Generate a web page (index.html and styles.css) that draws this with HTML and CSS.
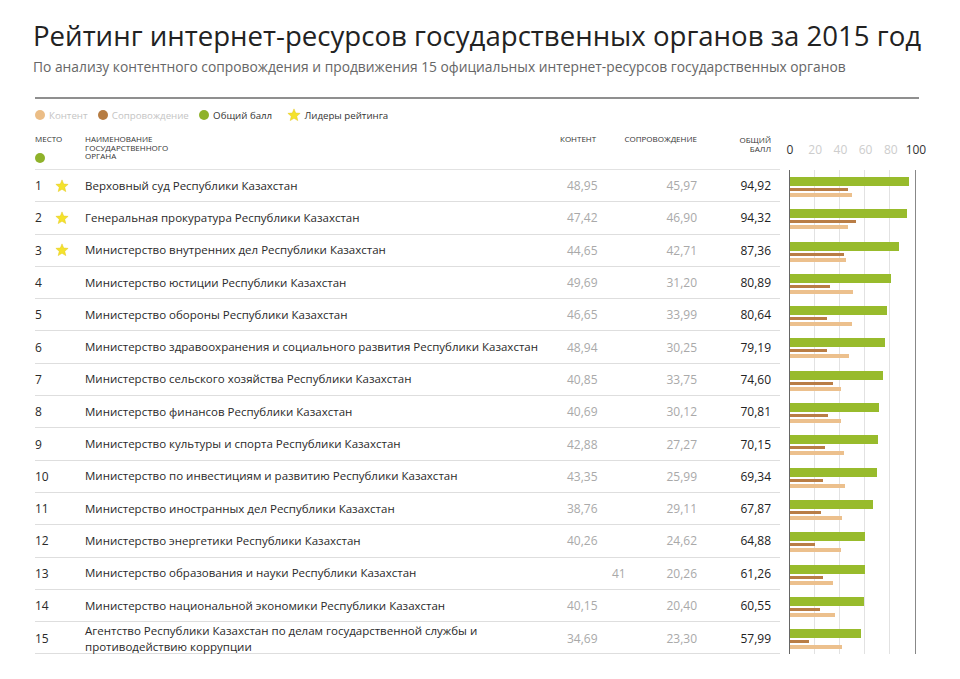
FILE: index.html
```html
<!DOCTYPE html>
<html lang="ru">
<head>
<meta charset="utf-8">
<title>Рейтинг интернет-ресурсов государственных органов за 2015 год</title>
<link rel="stylesheet" href="styles.css">
</head>
<body>
<svg width="0" height="0" class="defs">
  <defs>
    <symbol id="star" viewBox="0 0 24 24">
      <polygon points="12,1.5 14.9,8.6 22.5,9.2 16.7,14.1 18.5,21.6 12,17.6 5.5,21.6 7.3,14.1 1.5,9.2 9.1,8.6" fill="#f4e22c" stroke="#e2c715" stroke-width="0.8" stroke-linejoin="round"/>
    </symbol>
  </defs>
</svg>
<div class="page">
  <h1 class="title">Рейтинг интернет-ресурсов государственных органов за 2015 год</h1>
  <p class="subtitle">По анализу контентного сопровождения и продвижения 15 официальных интернет-ресурсов государственных органов</p>
  <div class="rule"></div>

  <div class="legend">
    <span class="lg-item lg-light"><i class="dot dot-content"></i>Контент</span>
    <span class="lg-item lg-light"><i class="dot dot-support"></i>Сопровождение</span>
    <span class="lg-item"><i class="dot dot-total"></i>Общий балл</span>
    <span class="lg-item lg-star"><svg class="star"><use href="#star"/></svg>Лидеры рейтинга</span>
  </div>

  <div class="head">
    <div class="cells head-cells">
      <div class="h-rank"><span>МЕСТО</span><i class="dot dot-total"></i></div>
      <div class="h-name">НАИМЕНОВАНИЕ<br>ГОСУДАРСТВЕННОГО<br>ОРГАНА</div>
      <div class="h-content">КОНТЕНТ</div>
      <div class="h-support">СОПРОВОЖДЕНИЕ</div>
      <div class="h-total">ОБЩИЙ<br>БАЛЛ</div>
    </div>
    <div class="axis">
      <span class="tick tick-dark">0</span>
      <span class="tick">20</span>
      <span class="tick">40</span>
      <span class="tick">60</span>
      <span class="tick">80</span>
      <span class="tick tick-dark">100</span>
    </div>
  </div>

  <div class="rows">
    <div class="row">
      <div class="cells">
        <div class="rank">1<svg class="star"><use href="#star"/></svg></div>
        <div class="name">Верховный суд Республики Казахстан</div>
        <div class="num content">48,95</div>
        <div class="num support">45,97</div>
        <div class="num total">94,92</div>
      </div>
      <div class="chart"><div class="bar b-total" style="width:94.9%"></div><div class="bar b-support" style="width:46.3%"></div><div class="bar b-content" style="width:49.2%"></div></div>
    </div>
    <div class="row">
      <div class="cells">
        <div class="rank">2<svg class="star"><use href="#star"/></svg></div>
        <div class="name">Генеральная прокуратура Республики Казахстан</div>
        <div class="num content">47,42</div>
        <div class="num support">46,90</div>
        <div class="num total">94,32</div>
      </div>
      <div class="chart"><div class="bar b-total" style="width:93.9%"></div><div class="bar b-support" style="width:52.4%"></div><div class="bar b-content" style="width:46.3%"></div></div>
    </div>
    <div class="row">
      <div class="cells">
        <div class="rank">3<svg class="star"><use href="#star"/></svg></div>
        <div class="name">Министерство внутренних дел Республики Казахстан</div>
        <div class="num content">44,65</div>
        <div class="num support">42,71</div>
        <div class="num total">87,36</div>
      </div>
      <div class="chart"><div class="bar b-total" style="width:87.5%"></div><div class="bar b-support" style="width:43.1%"></div><div class="bar b-content" style="width:44.9%"></div></div>
    </div>
    <div class="row">
      <div class="cells">
        <div class="rank">4</div>
        <div class="name">Министерство юстиции Республики Казахстан</div>
        <div class="num content">49,69</div>
        <div class="num support">31,20</div>
        <div class="num total">80,89</div>
      </div>
      <div class="chart"><div class="bar b-total" style="width:81.1%"></div><div class="bar b-support" style="width:31.6%"></div><div class="bar b-content" style="width:50%"></div></div>
    </div>
    <div class="row">
      <div class="cells">
        <div class="rank">5</div>
        <div class="name">Министерство обороны Республики Казахстан</div>
        <div class="num content">46,65</div>
        <div class="num support">33,99</div>
        <div class="num total">80,64</div>
      </div>
      <div class="chart"><div class="bar b-total" style="width:77.9%"></div><div class="bar b-support" style="width:29.3%"></div><div class="bar b-content" style="width:49.2%"></div></div>
    </div>
    <div class="row">
      <div class="cells">
        <div class="rank">6</div>
        <div class="name">Министерство здравоохранения и социального развития Республики Казахстан</div>
        <div class="num content">48,94</div>
        <div class="num support">30,25</div>
        <div class="num total">79,19</div>
      </div>
      <div class="chart"><div class="bar b-total" style="width:75.8%"></div><div class="bar b-support" style="width:29.5%"></div><div class="bar b-content" style="width:46.8%"></div></div>
    </div>
    <div class="row">
      <div class="cells">
        <div class="rank">7</div>
        <div class="name">Министерство сельского хозяйства Республики Казахстан</div>
        <div class="num content">40,85</div>
        <div class="num support">33,75</div>
        <div class="num total">74,60</div>
      </div>
      <div class="chart"><div class="bar b-total" style="width:74.7%"></div><div class="bar b-support" style="width:34.3%"></div><div class="bar b-content" style="width:41%"></div></div>
    </div>
    <div class="row">
      <div class="cells">
        <div class="rank">8</div>
        <div class="name">Министерство финансов Республики Казахстан</div>
        <div class="num content">40,69</div>
        <div class="num support">30,12</div>
        <div class="num total">70,81</div>
      </div>
      <div class="chart"><div class="bar b-total" style="width:71%"></div><div class="bar b-support" style="width:30.6%"></div><div class="bar b-content" style="width:41%"></div></div>
    </div>
    <div class="row">
      <div class="cells">
        <div class="rank">9</div>
        <div class="name">Министерство культуры и спорта Республики Казахстан</div>
        <div class="num content">42,88</div>
        <div class="num support">27,27</div>
        <div class="num total">70,15</div>
      </div>
      <div class="chart"><div class="bar b-total" style="width:70.5%"></div><div class="bar b-support" style="width:27.7%"></div><div class="bar b-content" style="width:43.1%"></div></div>
    </div>
    <div class="row">
      <div class="cells">
        <div class="rank">10</div>
        <div class="name">Министерство по инвестициям и развитию Республики Казахстан</div>
        <div class="num content">43,35</div>
        <div class="num support">25,99</div>
        <div class="num total">69,34</div>
      </div>
      <div class="chart"><div class="bar b-total" style="width:69.7%"></div><div class="bar b-support" style="width:26.6%"></div><div class="bar b-content" style="width:43.6%"></div></div>
    </div>
    <div class="row">
      <div class="cells">
        <div class="rank">11</div>
        <div class="name">Министерство иностранных дел Республики Казахстан</div>
        <div class="num content">38,76</div>
        <div class="num support">29,11</div>
        <div class="num total">67,87</div>
      </div>
      <div class="chart"><div class="bar b-total" style="width:66.2%"></div><div class="bar b-support" style="width:25%"></div><div class="bar b-content" style="width:41.8%"></div></div>
    </div>
    <div class="row">
      <div class="cells">
        <div class="rank">12</div>
        <div class="name">Министерство энергетики Республики Казахстан</div>
        <div class="num content">40,26</div>
        <div class="num support">24,62</div>
        <div class="num total">64,88</div>
      </div>
      <div class="chart"><div class="bar b-total" style="width:59.8%"></div><div class="bar b-support" style="width:20.2%"></div><div class="bar b-content" style="width:40.4%"></div></div>
    </div>
    <div class="row">
      <div class="cells">
        <div class="rank">13</div>
        <div class="name">Министерство образования и науки Республики Казахстан</div>
        <div class="num content content-short">41</div>
        <div class="num support">20,26</div>
        <div class="num total">61,26</div>
      </div>
      <div class="chart"><div class="bar b-total" style="width:59.8%"></div><div class="bar b-support" style="width:26%"></div><div class="bar b-content" style="width:34%"></div></div>
    </div>
    <div class="row">
      <div class="cells">
        <div class="rank">14</div>
        <div class="name">Министерство национальной экономики Республики Казахстан</div>
        <div class="num content">40,15</div>
        <div class="num support">20,40</div>
        <div class="num total">60,55</div>
      </div>
      <div class="chart"><div class="bar b-total" style="width:59.3%"></div><div class="bar b-support" style="width:23.7%"></div><div class="bar b-content" style="width:35.9%"></div></div>
    </div>
    <div class="row">
      <div class="cells">
        <div class="rank">15</div>
        <div class="name name-two">Агентство Республики Казахстан по делам государственной службы и<br>противодействию коррупции</div>
        <div class="num content">34,69</div>
        <div class="num support">23,30</div>
        <div class="num total">57,99</div>
      </div>
      <div class="chart"><div class="bar b-total" style="width:56.4%"></div><div class="bar b-support" style="width:15.4%"></div><div class="bar b-content" style="width:41.2%"></div></div>
    </div>
  </div>
</div>
</body>
</html>
```
FILE: styles.css
```css
* { box-sizing: border-box; }

html, body {
  margin: 0;
  padding: 0;
  background: #ffffff;
}

body {
  font-family: "Open Sans", "Noto Sans", "DejaVu Sans", sans-serif;
  color: #2a2a2a;
}

.defs {
  position: absolute;
  width: 0;
  height: 0;
  overflow: hidden;
}

.page {
  width: 960px;
  padding: 18px 0 0 35px;
}

.title {
  margin: 0 0 0 -2px;
  font-size: 27.6px;
  line-height: 34px;
  font-weight: 400;
  color: #222;
  white-space: nowrap;
}

.subtitle {
  margin: 6px 0 0 -2px;
  font-size: 13.8px;
  line-height: 18px;
  color: #666;
  white-space: nowrap;
}

.rule {
  width: 884px;
  height: 0;
  margin-top: 21px;
  border-top: 2px solid #8f8f8f;
}

/* legend */
.legend {
  display: flex;
  align-items: center;
  height: 16px;
  margin-top: 8px;
  font-size: 9.7px;
  color: #333;
}

.lg-item {
  display: flex;
  align-items: center;
  margin-right: 10.3px;
  white-space: nowrap;
}

.lg-light { color: #c4c4c4; }

.lg-star { margin-left: 5px; }

.dot {
  display: inline-block;
  width: 10px;
  height: 10px;
  border-radius: 50%;
  margin-right: 4px;
  flex: none;
}

.dot-content { background: #ebbd86; }
.dot-support { background: #b67c42; }
.dot-total   { background: #8fb22a; }

.star {
  width: 14px;
  height: 14px;
  flex: none;
}

.lg-star .star { margin-right: 3px; }

/* header */
.head {
  display: flex;
  margin-top: 12px;
  height: 35px;
}

.cells {
  display: grid;
  grid-template-columns: 50px 475px 70px 67px 74px;
  width: 745px;
  flex: none;
}

.head-cells {
  border-bottom: 1px solid #e2e2e2;
  font-size: 8px;
  line-height: 8.5px;
  color: #333;
  align-items: start;
}

.h-rank {
  display: flex;
  flex-direction: column;
  align-items: flex-start;
}

.h-rank .dot {
  margin: 9px 0 0 0;
}

.h-support,
.h-total {
  justify-self: end;
  text-align: right;
  white-space: nowrap;
}

.h-total { padding-top: 1px; }

.axis {
  margin-left: 9px;
  width: 127px;
  height: 28px;
  display: flex;
  justify-content: space-between;
  align-items: center;
  font-size: 12px;
  color: #cdcdcd;
}

.tick {
  width: 0;
  display: flex;
  justify-content: center;
  white-space: nowrap;
}

.tick:first-child { margin-left: 1px; }

.tick-dark { color: #333; }

/* rows */
.row {
  display: flex;
  height: 32.3px;
}

.row .cells {
  border-bottom: 1px solid #dedede;
  align-items: center;
  font-size: 11.5px;
  color: #2a2a2a;
}

.rank {
  display: flex;
  align-items: center;
  font-size: 12px;
}

.rank .star {
  width: 14px;
  height: 14px;
  margin-left: 13px;
}

.name {
  white-space: nowrap;
  line-height: 16px;
}

.name-two { padding-top: 1px; }

.num {
  font-size: 12px;
  white-space: nowrap;
}

.content {
  color: #a9a9a9;
  padding-left: 7px;
}

.content-short { padding-left: 52px; }

.support {
  color: #a9a9a9;
  text-align: right;
}

.total {
  color: #222;
  text-align: right;
}

/* chart */
.chart {
  margin-left: 9px;
  width: 127px;
  flex: none;
  border-left: 1px solid #666;
  border-right: 1px solid #888;
  padding-top: 7px;
  background-image:
    linear-gradient(to right,
      transparent 24.5px, #e2e2e2 24.5px, #e2e2e2 25.5px,
      transparent 25.5px, transparent 49.5px, #e2e2e2 49.5px, #e2e2e2 50.5px,
      transparent 50.5px, transparent 74.5px, #e2e2e2 74.5px, #e2e2e2 75.5px,
      transparent 75.5px, transparent 99.5px, #e2e2e2 99.5px, #e2e2e2 100.5px,
      transparent 100.5px);
}

.bar { display: block; }

.b-total {
  height: 9px;
  background: #98bb2c;
}

.b-support {
  height: 3px;
  margin-top: 2px;
  background: #b97d45;
}

.b-content {
  height: 4px;
  margin-top: 2px;
  background: #ecc08d;
}
```
